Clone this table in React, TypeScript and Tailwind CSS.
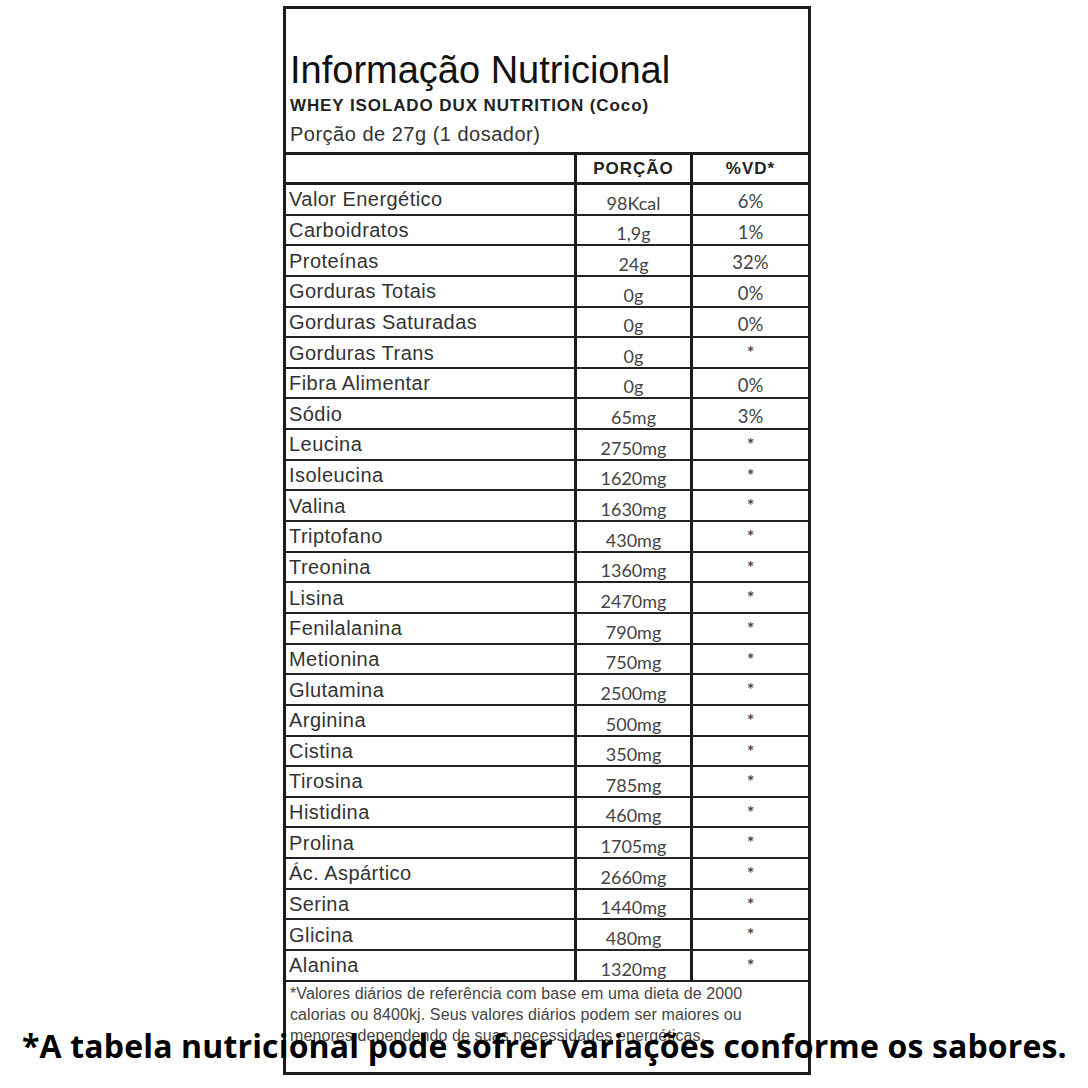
const rows: [string, string, string][] = [
  ['Valor Energético', '98Kcal', '6%'],
  ['Carboidratos', '1,9g', '1%'],
  ['Proteínas', '24g', '32%'],
  ['Gorduras Totais', '0g', '0%'],
  ['Gorduras Saturadas', '0g', '0%'],
  ['Gorduras Trans', '0g', '*'],
  ['Fibra Alimentar', '0g', '0%'],
  ['Sódio', '65mg', '3%'],
  ['Leucina', '2750mg', '*'],
  ['Isoleucina', '1620mg', '*'],
  ['Valina', '1630mg', '*'],
  ['Triptofano', '430mg', '*'],
  ['Treonina', '1360mg', '*'],
  ['Lisina', '2470mg', '*'],
  ['Fenilalanina', '790mg', '*'],
  ['Metionina', '750mg', '*'],
  ['Glutamina', '2500mg', '*'],
  ['Arginina', '500mg', '*'],
  ['Cistina', '350mg', '*'],
  ['Tirosina', '785mg', '*'],
  ['Histidina', '460mg', '*'],
  ['Prolina', '1705mg', '*'],
  ['Ác. Aspártico', '2660mg', '*'],
  ['Serina', '1440mg', '*'],
  ['Glicina', '480mg', '*'],
  ['Alanina', '1320mg', '*'],
]

export default function App() {
  return (
    <div className="relative w-[1088px] h-[1088px] bg-white overflow-hidden">
      <div className="ml-[283px] mt-[6px] w-[528px] h-[1069px] border-[3px] border-[#1c1c1c] flex flex-col font-['Liberation_Sans',Arial,sans-serif] text-[#2b2b2b]">
        {/* title block */}
        <div className="h-[146px] px-[4px] pt-[39px] border-b-[3px] border-[#1c1c1c]">
          <h1 className="text-[38px] leading-[44px] text-[#111]">Informação Nutricional</h1>
          <div className="mt-[5px] text-[17px] leading-[18px] font-bold tracking-[0.9px] text-[#222]">WHEY ISOLADO DUX NUTRITION (Coco)</div>
          <div className="text-[20px] leading-[38px] tracking-[0.5px] text-[#333]">Porção de 27g (1 dosador)</div>
        </div>

        {/* column header */}
        <div className="grid grid-cols-[291px_116px_1fr] h-[30px] border-b-[3px] border-[#1c1c1c]">
          <div className="border-r-[3px] border-[#1c1c1c]" />
          <div className="border-r-[3px] border-[#1c1c1c] flex items-center justify-center font-bold text-[17px] tracking-[1px] text-[#222]">PORÇÃO</div>
          <div className="flex items-center justify-center font-bold text-[17px] tracking-[1px] text-[#222]">%VD*</div>
        </div>

        {/* rows */}
        {rows.map(([name, qty, vd]) => (
          <div key={name} className="grid grid-cols-[291px_116px_1fr] h-[30.65px] border-b-[2px] border-[#222]">
            <div className="border-r-[3px] border-[#1c1c1c] pl-[3px] flex items-center text-[20px] tracking-[0.45px] leading-none text-[#333]">{name}</div>
            <div className="border-r-[3px] border-[#1c1c1c] flex items-end justify-center pb-[2px] font-['Lato',sans-serif] text-[18px] leading-none text-[#444]">{qty}</div>
            {vd === '*' ? (
              <div className="flex items-start justify-center pt-[6px] font-['Lato',sans-serif] font-bold text-[17px] leading-none text-[#444]">*</div>
            ) : (
              <div className="flex items-end justify-center pb-[3px] font-['Lato',sans-serif] text-[18.5px] leading-none text-[#444]">{vd}</div>
            )}
          </div>
        ))}

        {/* footnote */}
        <div className="flex-1 px-[4px] pt-[1px] text-[16px] leading-[21px] tracking-[0.1px] text-[#444] whitespace-nowrap">
          *Valores diários de referência com base em uma dieta de 2000
          <br />
          calorias ou 8400kj. Seus valores diários podem ser maiores ou
          <br />
          menores dependendo de suas necessidades energéticas.
        </div>
      </div>

      <p className="absolute left-[22px] top-[1026px] whitespace-nowrap font-['Open_Sans',sans-serif] font-bold text-[32px] leading-[40px] tracking-[0.15px] text-black">
        *A tabela nutricional pode sofrer variações conforme os sabores.
      </p>
    </div>
  )
}
